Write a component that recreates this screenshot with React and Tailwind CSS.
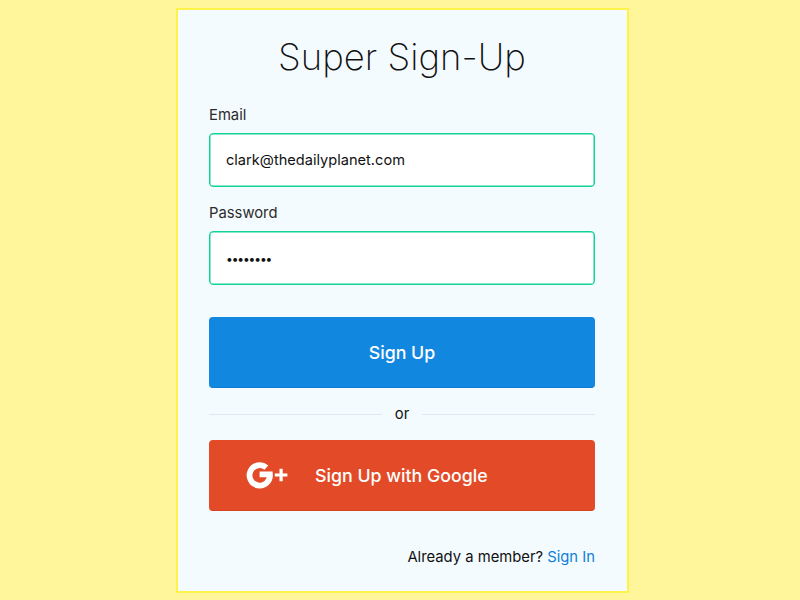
const Field = ({ label, type, value, labelClass, inputClass }) => (
  <label className={`block ${labelClass}`}>
    <span className="block text-[14.8px] leading-5 text-[#2b2b2b]">{label}</span>
    <input
      type={type}
      value={value}
      readOnly
      className={`mt-[8px] block h-[54px] w-full rounded-[4px] border border-[#12d296] bg-white px-[16px] text-[#111] shadow-[inset_0_0_0_0.5px_#12d296] outline-none ${inputClass}`}
    />
  </label>
);

const GooglePlus = () => (
  <svg width="42" height="28" viewBox="0 0 42 28" fill="none">
    <path
      d="M20.4 6.6A10.2 10.2 0 1 0 23.9 13.4H13.6"
      stroke="#fff"
      strokeWidth="5.8"
    />
    <path d="M35.1 7.7v12.6M28.8 14h12.6" stroke="#fff" strokeWidth="3.2" />
  </svg>
);

export default function App() {
  return (
    <div className="min-h-[600px] bg-[#fff69b] pt-[8px] font-['Inter',sans-serif]">
      <div className="ml-[176px] h-[585px] w-[453px] border-2 border-[#fff34a] bg-[#f4fbff] pl-[31px] pr-[32px]">
        <h1 className="pt-[25px] text-center text-[36.5px] font-extralight leading-[44px] text-[#111]">
          Super Sign-Up
        </h1>

        <Field label="Email" type="text" value="clark@thedailyplanet.com" labelClass="mt-[26px]" inputClass="text-[14.6px]" />
        <Field label="Password" type="password" value="password" labelClass="mt-[16px]" inputClass="text-[12px] tracking-[-1.1px]" />

        <button className="mt-[32px] block h-[71px] w-full rounded-[4px] border-b border-[#0f7ccf] bg-[#1287df] pt-[2px] text-[17.8px] font-[450] text-white">
          Sign Up
        </button>

        <div className="mt-[16px] flex h-[20px] items-center text-[14.8px] text-[#111]">
          <div className="h-px flex-1 bg-[#dfe8ec]" />
          <span className="px-[13px]">or</span>
          <div className="h-px flex-1 bg-[#dfe8ec]" />
        </div>

        <button className="mt-[16px] flex h-[71px] w-full items-center rounded-[4px] border-b border-[#d4431f] bg-[#e34b28] pl-[37px] text-[17.8px] font-[450] text-white">
          <GooglePlus />
          <span className="ml-[27px] pt-[2px]">Sign Up with Google</span>
        </button>

        <p className="mt-[36px] text-right text-[14.8px] leading-5 text-[#111]">
          Already a member? <a className="text-[#0f7fd6]">Sign In</a>
        </p>
      </div>
    </div>
  );
}
